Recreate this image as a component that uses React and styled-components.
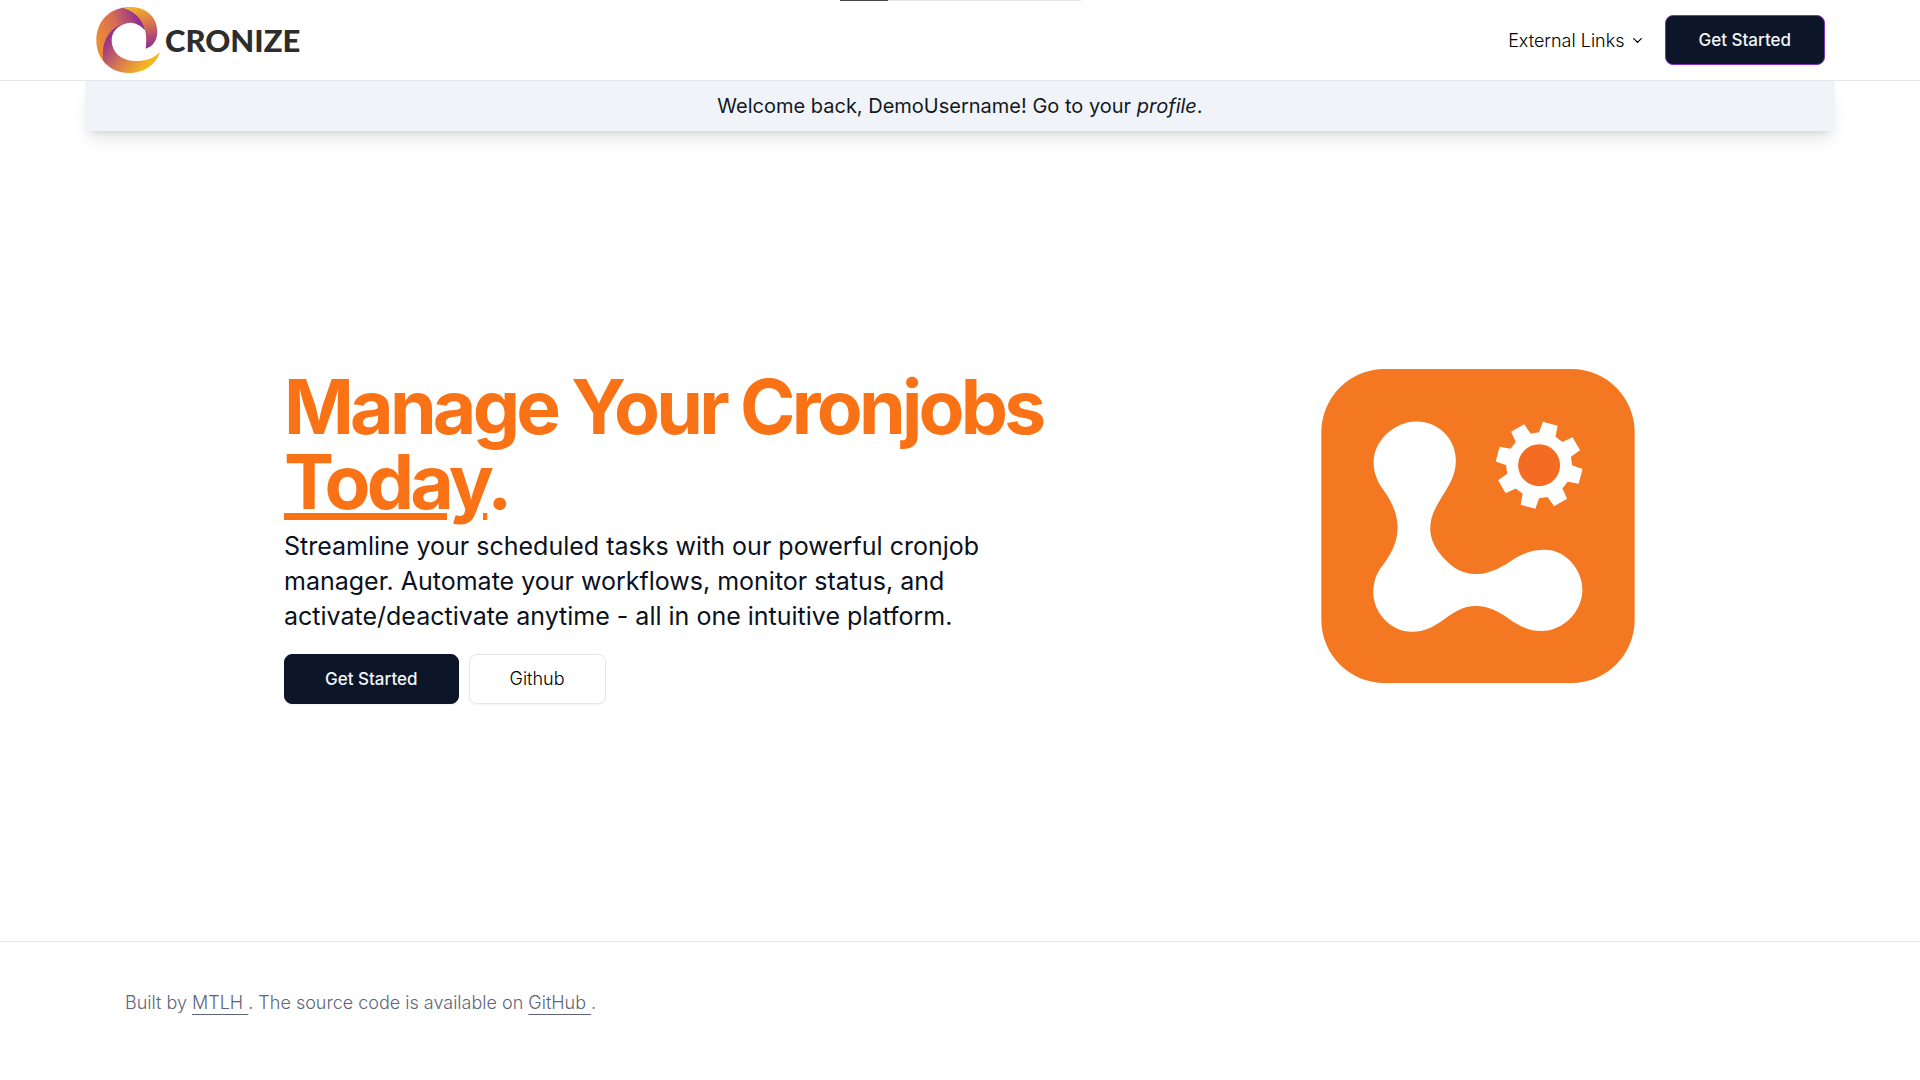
import React from "react";
import styled, { createGlobalStyle, css } from "styled-components";
import { ChevronDown } from "lucide-react";

const colors = {
  ink: "#0b1120",
  navy: "#0d1628",
  orange: "#f97316",
  border: "#e5e7eb",
  muted: "#5c657b",
  banner: "#f0f4f9",
};

const GlobalStyle = createGlobalStyle`
  *, *::before, *::after { box-sizing: border-box; }
  body {
    margin: 0;
    background: #fff;
    color: ${colors.ink};
    font-family: Inter, "Liberation Sans", sans-serif;
    font-size: 18px;
  }
  h1, p { margin: 0; }
`;

const Page = styled.div`
  min-height: 100vh;
  display: flex;
  flex-direction: column;
`;

const LoadingBar = styled.div`
  position: absolute;
  top: 0;
  left: 50%;
  width: 241px;
  height: 1px;
  margin-left: -120px;
  background: linear-gradient(to right, #444 20%, #e4e4e4 20%);
`;

const Header = styled.header`
  border-bottom: 1px solid ${colors.border};
`;

const Container = styled.div`
  width: 100%;
  max-width: 1750px;
  margin: 0 auto;
`;

const HeaderRow = styled(Container)`
  height: 80px;
  padding: 0 10px;
  display: flex;
  align-items: center;
  justify-content: space-between;
`;

const Brand = styled.a`
  display: flex;
  align-items: center;
  gap: 4px;
  color: #2d2d2d;
  text-decoration: none;
  font-family: Lato, "Liberation Sans", sans-serif;
  font-size: 31px;
  font-weight: 900;
  line-height: 40px;
`;

const Nav = styled.nav`
  display: flex;
  align-items: center;
  gap: 20px;
`;

const MenuButton = styled.button`
  display: flex;
  align-items: center;
  gap: 5px;
  padding: 0;
  border: 0;
  background: none;
  color: #000;
  font: inherit;
  font-weight: 300;
  cursor: pointer;
`;

const Button = styled.button`
  height: 50px;
  padding: 0 ${(p) => (p.$compact ? 33 : 40)}px;
  border: 1px solid ${colors.navy};
  border-radius: 8px;
  background: ${colors.navy};
  color: #f1f5f9;
  font: inherit;
  font-size: 17px;
  font-weight: 500;
  cursor: pointer;
  box-shadow: 0 1px 2px rgba(0, 0, 0, 0.06);
  ${(p) => p.$accent && css`border-color: #7a35c4;`}
  ${(p) =>
    p.$outline &&
    css`
      border-color: ${colors.border};
      background: #fff;
      color: #000;
      font-size: 18px;
      font-weight: 300;
    `}
`;

const Banner = styled(Container)`
  padding: 10px 20px;
  background: ${colors.banner};
  box-shadow: 0 12px 18px -4px rgba(0, 0, 0, 0.1), 0 5px 8px -5px rgba(0, 0, 0, 0.12);
  color: #14181f;
  font-size: 20px;
  line-height: 30px;
  text-align: center;
`;

const ProfileLink = styled.a`
  color: inherit;
  font-style: italic;
  text-decoration: none;
`;

const Hero = styled.main`
  flex: 1;
  width: 100%;
  max-width: 1750px;
  margin: 0 auto;
  padding: 40px 200px 40px 199px;
  display: flex;
  align-items: center;
`;

const HeroRow = styled.div`
  flex: 1;
  display: flex;
  align-items: flex-start;
  justify-content: space-between;
  gap: 40px;
`;

const HeroText = styled.div`
  max-width: 800px;
`;

const Title = styled.h1`
  color: ${colors.orange};
  font-size: 75px;
  font-weight: 700;
  line-height: 75px;
  letter-spacing: -0.05em;
`;

const Lead = styled.p`
  max-width: 760px;
  margin-top: 10px;
  font-size: 25px;
  line-height: 35px;
`;

const Actions = styled.div`
  display: flex;
  gap: 10px;
  margin-top: 20px;
`;

const Footer = styled.footer`
  padding-bottom: 16px;
  border-top: 1px solid ${colors.border};
`;

const FooterRow = styled(Container)`
  min-height: 122px;
  padding: 0 40px;
  display: flex;
  align-items: center;
  color: ${colors.muted};
  font-weight: 300;
  line-height: 30px;
`;

const FooterLink = styled.a`
  color: inherit;
  text-decoration: underline;
  text-decoration-thickness: 1px;
  text-underline-offset: 5px;
  white-space: pre;
`;

function BrandMark() {
  return (
    <svg width="66" height="66" viewBox="45 20 198 198" aria-hidden="true">
      <defs>
        <linearGradient id="right" gradientUnits="userSpaceOnUse" x1="170" y1="20" x2="200" y2="145">
          <stop offset="0" stopColor="#f3b02c" />
          <stop offset="0.4" stopColor="#dc7a4b" />
          <stop offset="1" stopColor="#8f2a93" />
        </linearGradient>
        <linearGradient id="left" gradientUnits="userSpaceOnUse" x1="55" y1="110" x2="185" y2="65">
          <stop offset="0" stopColor="#ec8a35" />
          <stop offset="0.45" stopColor="#d46d55" />
          <stop offset="1" stopColor="#8f2a93" />
        </linearGradient>
        <linearGradient id="bottom" gradientUnits="userSpaceOnUse" x1="75" y1="110" x2="190" y2="205">
          <stop offset="0" stopColor="#8f2a93" />
          <stop offset="0.55" stopColor="#d67850" />
          <stop offset="1" stopColor="#f7b51e" />
        </linearGradient>
      </defs>
      <path fill="url(#left)" d="M165 22C100 12 49 55 49 120C49 152 62 178 82 196L72 170C78 110 110 72 148 67C166 67 182 75 195 90C194 60 170 35 130 22Z" />
      <path fill="url(#right)" d="M130 22C190 12 232 45 232 95C232 118 220 138 197 145C199 128 200 105 194 86C186 58 165 32 130 22Z" />
      <path fill="url(#bottom)" d="M134 69C88 82 62 125 70 180C88 207 115 218 148 218C195 218 229 190 240 155C220 176 190 184 160 182C120 179 95 154 95 120C95 98 110 77 134 69Z" />
    </svg>
  );
}

const gear = { x: 688, y: 316, teeth: 8, start: -75 };

const gearPoints = Array.from({ length: gear.teeth }, (_, i) => {
  const middle = gear.start + (i * 360) / gear.teeth;
  return [[-15, 99], [-10, 131], [10, 131], [15, 99]]
    .map(([turn, radius]) => {
      const a = ((middle + turn) * Math.PI) / 180;
      return `${(gear.x + radius * Math.cos(a)).toFixed(1)},${(gear.y + radius * Math.sin(a)).toFixed(1)}`;
    })
    .join(" ");
}).join(" ");

function HeroMark() {
  return (
    <svg width="314" height="314" viewBox="34 27 941 943" role="img" aria-label="Cronjob manager">
      <rect x="34" y="27" width="941" height="943" rx="190" fill="#f47721" />
      <path
        fill="#fff"
        d="M320 185C387 185 438 238 438 302C438 333 427 362 410 388C385 430 361 462 361 506C361 540 378 568 398 591C426 623 458 643 497 643C535 643 568 627 601 605C632 583 664 570 706 570C766 570 818 628 818 690C818 754 762 814 695 814C656 814 627 797 600 779C567 756 537 739 498 739C459 739 433 757 402 779C373 800 344 816 306 816C243 816 190 758 190 698C190 667 200 639 218 617C243 583 263 549 263 503C263 457 241 419 218 387C202 364 191 338 191 307C191 243 253 185 320 185Z"
      />
      <polygon fill="#fff" points={gearPoints} />
      <circle cx={gear.x} cy={gear.y} r="63" fill="#f36c21" />
    </svg>
  );
}

export default function App() {
  return (
    <Page>
      <GlobalStyle />
      <LoadingBar />
      <Header>
        <HeaderRow>
          <Brand href="#">
            <BrandMark />
            CRONIZE
          </Brand>
          <Nav>
            <MenuButton type="button" aria-haspopup="menu">
              External Links
              <ChevronDown size={15} aria-hidden="true" />
            </MenuButton>
            <Button type="button" $compact $accent>Get Started</Button>
          </Nav>
        </HeaderRow>
      </Header>
      <Banner>
        Welcome back, DemoUsername! Go to your <ProfileLink href="#profile">profile</ProfileLink>.
      </Banner>
      <Hero>
        <HeroRow>
          <HeroText>
            <Title>
              Manage Your Cronjobs <u>Today</u>.
            </Title>
            <Lead>
              Streamline your scheduled tasks with our powerful cronjob manager. Automate your
              workflows, monitor status, and activate/deactivate anytime - all in one intuitive
              platform.
            </Lead>
            <Actions>
              <Button type="button">Get Started</Button>
              <Button type="button" $outline>Github</Button>
            </Actions>
          </HeroText>
          <HeroMark />
        </HeroRow>
      </Hero>
      <Footer>
        <FooterRow>
          <p>
            Built by <FooterLink href="#author">{"MTLH "}</FooterLink>. The source code is available
            on <FooterLink href="#source">{"GitHub "}</FooterLink>.
          </p>
        </FooterRow>
      </Footer>
    </Page>
  );
}
